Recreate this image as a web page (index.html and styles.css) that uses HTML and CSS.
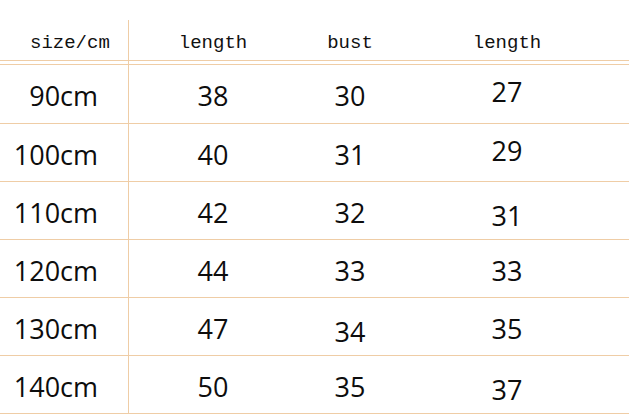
FILE: index.html
```html
<!DOCTYPE html>
<html>
<head>
<meta charset="utf-8">
<link rel="stylesheet" href="styles.css">
</head>
<body>
<div class="sheet">
  <div class="row head">
    <div class="cell first hfirst">size/cm</div>
    <div class="cell">length</div>
    <div class="cell">bust</div>
    <div class="cell">length</div>
  </div>
  <div class="row gap"><div class="cell first"></div></div>
  <div class="row data tall">
    <div class="cell first">90cm</div><div class="cell">38</div><div class="cell">30</div><div class="cell up">27</div>
  </div>
  <div class="row data">
    <div class="cell first">100cm</div><div class="cell">40</div><div class="cell">31</div><div class="cell up">29</div>
  </div>
  <div class="row data">
    <div class="cell first">110cm</div><div class="cell">42</div><div class="cell">32</div><div class="cell down">31</div>
  </div>
  <div class="row data">
    <div class="cell first">120cm</div><div class="cell">44</div><div class="cell">33</div><div class="cell">33</div>
  </div>
  <div class="row data">
    <div class="cell first">130cm</div><div class="cell">47</div><div class="cell down">34</div><div class="cell">35</div>
  </div>
  <div class="row data">
    <div class="cell first">140cm</div><div class="cell">50</div><div class="cell">35</div><div class="cell down">37</div>
  </div>
</div>
</body>
</html>
```

FILE: styles.css
```css
html, body {
  margin: 0;
  padding: 0;
  background: #ffffff;
}

.sheet {
  width: 629px;
  height: 414px;
  padding-top: 20px;
  box-sizing: border-box;
  overflow: hidden;
}

.row {
  display: grid;
  grid-template-columns: 129px 168px 106px 208px 1fr;
  border-bottom: 1px solid #efcda6;
}

.cell {
  display: flex;
  align-items: center;
  justify-content: center;
  padding-top: 3px;
}

.cell.first {
  border-right: 1px solid #efcda6;
  justify-content: flex-end;
  padding-right: 30px;
}

.head {
  height: 41px;
  box-sizing: border-box;
  font-family: "Liberation Mono", "DejaVu Sans Mono", monospace;
  font-size: 19px;
  color: #111111;
}

.head .cell {
  padding-top: 5px;
}

.head .cell.hfirst {
  justify-content: flex-start;
  padding-left: 30px;
  padding-right: 0;
}

.gap {
  height: 4px;
  box-sizing: border-box;
}

.gap .cell {
  padding-top: 0;
}

.data {
  height: 58px;
  box-sizing: border-box;
  font-family: "Open Sans", "Noto Sans", sans-serif;
  font-size: 27px;
  color: #0d0d0d;
}

.data.tall {
  height: 59px;
}

.cell.up {
  padding-top: 0;
  padding-bottom: 5px;
}

.cell.down {
  padding-top: 10px;
}
```
